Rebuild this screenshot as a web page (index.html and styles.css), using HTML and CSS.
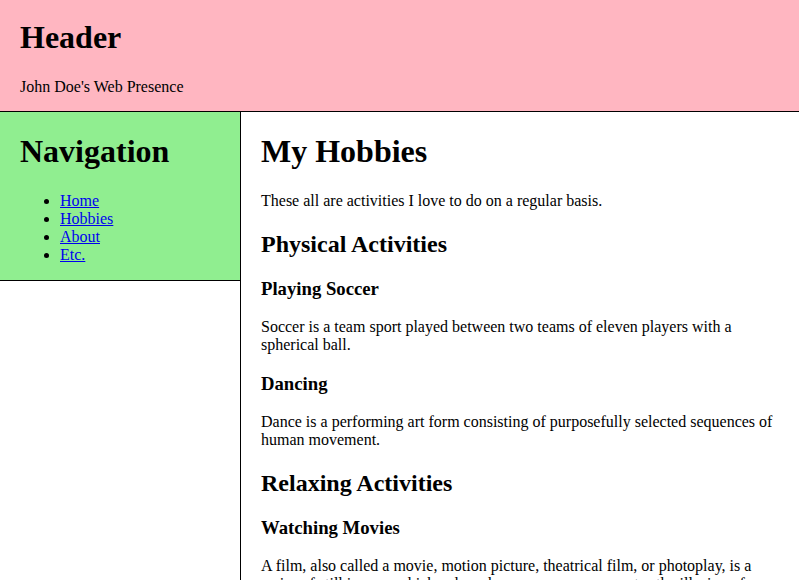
FILE: index.html
```html
<!DOCTYPE html>
<html>
<head>
<meta charset="utf-8">
<title>John Doe</title>
<link rel="stylesheet" href="styles.css">
</head>
<body>
<div class="page">
  <header class="site-header">
    <h1 class="header-title">Header</h1>
    <p class="header-sub">John Doe's Web Presence</p>
  </header>
  <nav class="site-nav">
    <div class="nav-box">
      <h1 class="nav-title">Navigation</h1>
      <ul class="nav-list">
        <li><a href="#">Home</a></li>
        <li><a href="#">Hobbies</a></li>
        <li><a href="#">About</a></li>
        <li><a href="#">Etc.</a></li>
      </ul>
    </div>
  </nav>
  <main class="content">
    <h1>My Hobbies</h1>
    <p>These all are activities I love to do on a regular basis.</p>
    <h2>Physical Activities</h2>
    <h3>Playing Soccer</h3>
    <p>Soccer is a team sport played between two teams of eleven players with a spherical ball.</p>
    <h3>Dancing</h3>
    <p>Dance is a performing art form consisting of purposefully selected sequences of human movement.</p>
    <h2>Relaxing Activities</h2>
    <h3>Watching Movies</h3>
    <p>A film, also called a movie, motion picture, theatrical film, or photoplay, is a series of still images which, when shown on a screen, creates the illusion of moving images due to the phi phenomenon.</p>
  </main>
</div>
</body>
</html>
```
FILE: styles.css
```css
html, body {
  margin: 0;
  padding: 0;
}
body {
  font-family: "Liberation Serif", "Times New Roman", serif;
  font-size: 16px;
  color: #000;
  background: #fff;
}
.page {
  display: grid;
  grid-template-columns: 240px 1fr;
  grid-template-rows: auto 1fr;
  min-height: 100vh;
}
.site-header {
  grid-column: 1 / 3;
  background: #ffb6c1;
  border-bottom: 1px solid #000;
  padding: 0 20px;
  display: flow-root;
}
.header-title {
  font-size: 32px;
  margin: 19px 0 0;
}
.header-sub {
  margin: 22px 0 15px;
}
.site-nav {
  grid-column: 1;
}
.nav-box {
  background: #90ee90;
  border-bottom: 1px solid #000;
  padding: 0 20px;
  display: flow-root;
}
.nav-title {
  font-size: 32px;
  margin: 21.44px 0;
}
.nav-list {
  margin: 16px 0 16px;
  padding-left: 40px;
}
.nav-list a {
  color: #0000ee;
}
.content {
  grid-column: 2;
  border-left: 1px solid #000;
  padding: 0 20px;
  display: flow-root;
}
.content h1 {
  font-size: 32px;
  margin: 21.44px 0;
}
.content h2 {
  font-size: 24px;
  margin: 21px 0 20px;
}
.content h3 {
  font-size: 18.72px;
  margin: 19.6px 0 18px;
}
.content p {
  margin: 16px 0;
}
```
